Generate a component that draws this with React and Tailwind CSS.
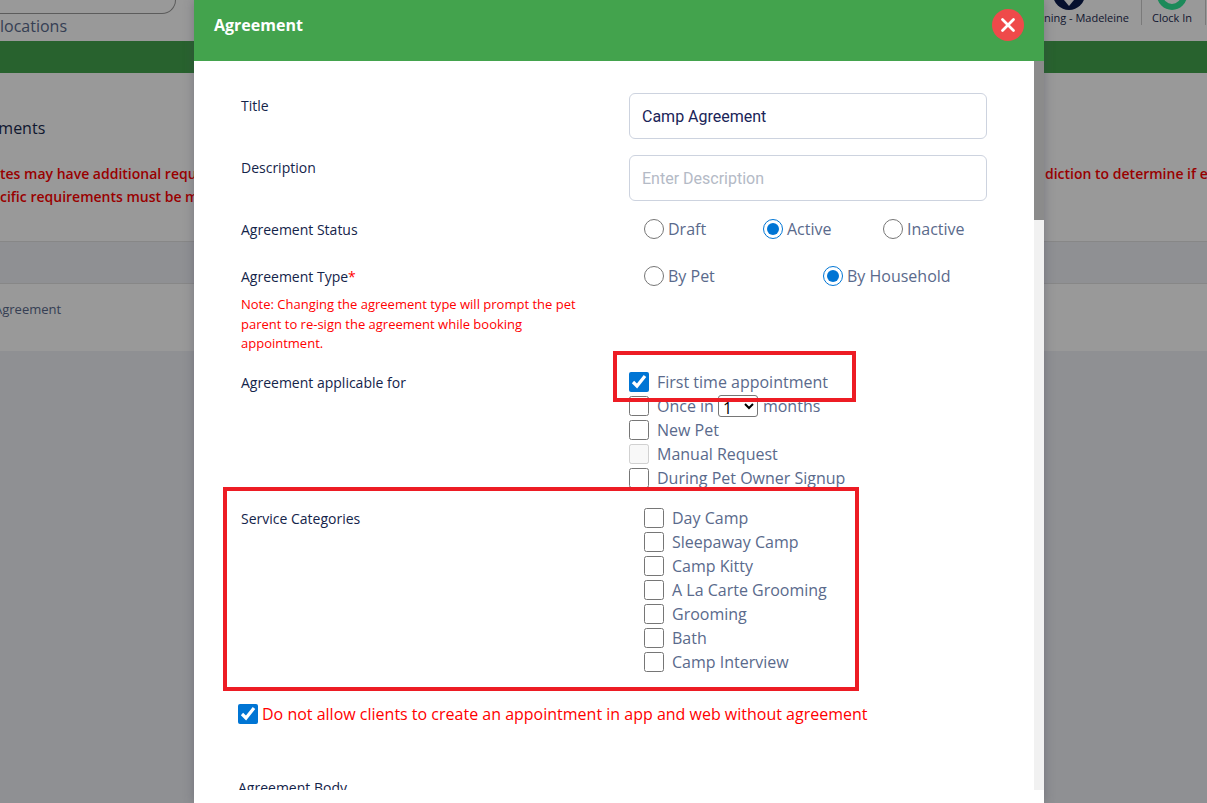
import { X } from 'lucide-react';

const applicable = ['New Pet'];
const categories = ['Day Camp', 'Sleepaway Camp', 'Camp Kitty', 'A La Carte Grooming', 'Grooming', 'Bath', 'Camp Interview'];

function Label({ children }) {
  return <div className="text-[14px] leading-[20px] font-medium text-[#14244a]">{children}</div>;
}

function Radio({ label, checked }) {
  return (
    <label className="flex items-center gap-[4px] h-5">
      <input type="radio" readOnly checked={!!checked} className="w-5 h-5 m-0 accent-[#0075d4]" />
      <span className="text-[16px] text-[#5a6a8c]">{label}</span>
    </label>
  );
}

function Check({ children, checked, disabled }) {
  return (
    <label className="flex items-center gap-2 h-6">
      <input type="checkbox" readOnly checked={!!checked} disabled={disabled} className="w-5 h-5 m-0 shrink-0 accent-[#0075d4]" />
      <span className="flex items-center gap-[4px] text-[16px] text-[#5a6a8c] whitespace-nowrap">{children}</span>
    </label>
  );
}

function Page() {
  return (
    <div className="h-full flex flex-col bg-[#eef0f5] font-['Open_Sans',sans-serif]">
      {/* top bar */}
      <div className="h-[41px] bg-white flex justify-between shrink-0 overflow-hidden">
        <div className="w-[176px]">
          <div className="h-[14px] border-b border-r border-[#999] rounded-br-[14px]" />
          <div className="text-[16px] leading-[25px] text-[#5a6a8c] whitespace-nowrap">locations</div>
        </div>
        <div className="flex">
          <div className="w-[142px] flex flex-col items-end pr-[12px] border-r border-[#ccc] h-[25px]">
            <svg viewBox="0 0 32 32" className="w-[32px] h-[32px] -mt-[22px] mr-[44px] shrink-0">
              <circle cx="16" cy="16" r="16" fill="#0b1b4d" />
              <path d="M11 22 L21 22 L16 28 Z" fill="#fff" />
            </svg>
            <div className="text-[11px] leading-[16px] text-[#1a2a4f] whitespace-nowrap">ning - Madeleine</div>
          </div>
          <div className="w-[64px] flex flex-col items-center pr-[3px] border-r border-[#ccc] h-[25px]">
            <div className="w-[30px] h-[30px] rounded-full border-[6px] border-[#30e696] -mt-[20px] shrink-0" />
            <div className="text-[11px] leading-[16px] text-[#1a2a4f] whitespace-nowrap">Clock In</div>
          </div>
          <div className="w-[1px]" />
        </div>
      </div>
      <div className="h-[32px] bg-[#43a34d] shrink-0" />

      {/* agreements section */}
      <div className="h-[168px] bg-white shrink-0 overflow-hidden">
        <div className="mt-[43px] text-[16px] leading-[24px] font-medium text-[#1a2a4f] -ml-[45px] whitespace-nowrap">Agreements</div>
        <div className="mt-[22px] text-[14px] leading-[23px] font-semibold text-[#ff0000]">
          <div className="flex justify-between whitespace-nowrap">
            <span>tes may have additional requirements</span>
            <span className="w-[162px]">diction to determine if e</span>
          </div>
          <div className="whitespace-nowrap">cific requirements must be met</div>
        </div>
      </div>

      {/* table */}
      <div className="h-[43px] bg-[#eef0f5] border-y border-[#e2e2e2] shrink-0" />
      <div className="h-[67px] bg-white shrink-0 pt-[15px] text-[13px] leading-[20px] text-[#5a6a8c] overflow-hidden">
        <div className="-ml-[6px] whitespace-nowrap">Agreement</div>
      </div>
    </div>
  );
}

function Modal() {
  return (
    <div className="absolute top-0 left-[194px] w-[850px] h-[803px] flex flex-col bg-white shadow-[0_0_10px_rgba(60,60,80,0.35)] font-['Open_Sans',sans-serif]">
      <div className="h-[61px] shrink-0 bg-[#43a34d] flex items-center justify-between pl-[20px] pr-[20px] pb-[11px]">
        <h2 className="text-[16px] leading-[26px] font-bold text-white">Agreement</h2>
        <button className="w-8 h-8 rounded-full bg-[#ef4a4a] flex items-center justify-center text-white">
          <X size={22} strokeWidth={3} />
        </button>
      </div>

      <div className="h-[729px] shrink-0 flex overflow-hidden">
        <div className="flex-1 min-w-0 px-[47px] pt-[32px]">
          <div className="grid grid-cols-[388px_1fr] items-start">
            <div className="pt-[3px]"><Label>Title</Label></div>
            <div className="h-[46px] border border-[#cdd3df] rounded-[6px] px-3 pt-[2px] flex items-center font-['Roboto',sans-serif] text-[16px] text-[#1a2458]">Camp Agreement</div>
          </div>
          <div className="grid grid-cols-[388px_1fr] items-start mt-4">
            <div className="pt-[3px]"><Label>Description</Label></div>
            <div className="h-[46px] border border-[#cdd3df] rounded-[6px] px-3 pt-[2px] flex items-center font-['Roboto',sans-serif] text-[16px] text-[#b4bac6]">Enter Description</div>
          </div>

          <div className="grid grid-cols-[388px_1fr] items-start mt-[18px]">
            <div className="pt-[1px]"><Label>Agreement Status</Label></div>
            <div className="pl-[15px] grid grid-cols-[119px_120px_1fr]">
              <Radio label="Draft" />
              <Radio label="Active" checked />
              <Radio label="Inactive" />
            </div>
          </div>

          <div className="grid grid-cols-[388px_1fr] items-start mt-[26px]">
            <div>
              <div className="pt-[1px] text-[14px] leading-[20px] font-medium text-[#14244a]">Agreement Type<span className="text-[#ff0000]">*</span></div>
              <p className="mt-[8px] w-[350px] text-[13px] leading-[19.5px] font-medium text-[#ff0000]">
                Note: Changing the agreement type will prompt the pet parent to re-sign the agreement while booking appointment.
              </p>
            </div>
            <div className="pl-[15px] grid grid-cols-[179px_1fr]">
              <Radio label="By Pet" />
              <Radio label="By Household" checked />
            </div>
          </div>

          <div className="grid grid-cols-[388px_1fr] items-start mt-[16px]">
            <div className="pt-[3px]"><Label>Agreement applicable for</Label></div>
            <div>
              <Check checked>First time appointment</Check>
              <Check>
                Once in
                <select className="w-[40px] h-[22px] border border-[#767676] rounded-[3px] text-[16px] text-black bg-white">
                  <option>1</option>
                </select>
                <span className="ml-px">months</span>
              </Check>
              {applicable.map((name) => <Check key={name}>{name}</Check>)}
              <Check disabled>Manual Request</Check>
              <Check>During Pet Owner Signup</Check>
            </div>
          </div>

          <div className="grid grid-cols-[388px_1fr] items-start mt-[16px]">
            <div className="pt-[3px]"><Label>Service Categories</Label></div>
            <div className="pl-[15px]">
              {categories.map((name) => <Check key={name}>{name}</Check>)}
            </div>
          </div>

          <label className="flex items-center gap-1 h-6 mt-[28px] -ml-[3px]">
            <input type="checkbox" readOnly checked className="w-5 h-5 m-0 accent-[#0075d4]" />
            <span className="text-[16px] text-[#ff0000] whitespace-nowrap">Do not allow clients to create an appointment in app and web without agreement</span>
          </label>

          <div className="mt-[52px] -ml-[3px]"><Label>Agreement Body</Label></div>
        </div>

        {/* scrollbar */}
        <div className="w-[10px] shrink-0 bg-[#f1f1f1]">
          <div className="h-[159px] bg-[#8b8b8b]" />
        </div>
      </div>
    </div>
  );
}

export default function App() {
  return (
    <div className="relative w-[1207px] h-[803px] overflow-hidden">
      <Page />
      <div className="absolute inset-0 bg-black/40" />
      <Modal />
      {/* annotation boxes drawn over the screenshot */}
      <div className="absolute left-[613px] top-[351px] w-[243px] h-[51px] border-4 border-[#ed1c24]" />
      <div className="absolute left-[223px] top-[487px] w-[636px] h-[204px] border-4 border-[#ed1c24]" />
    </div>
  );
}
